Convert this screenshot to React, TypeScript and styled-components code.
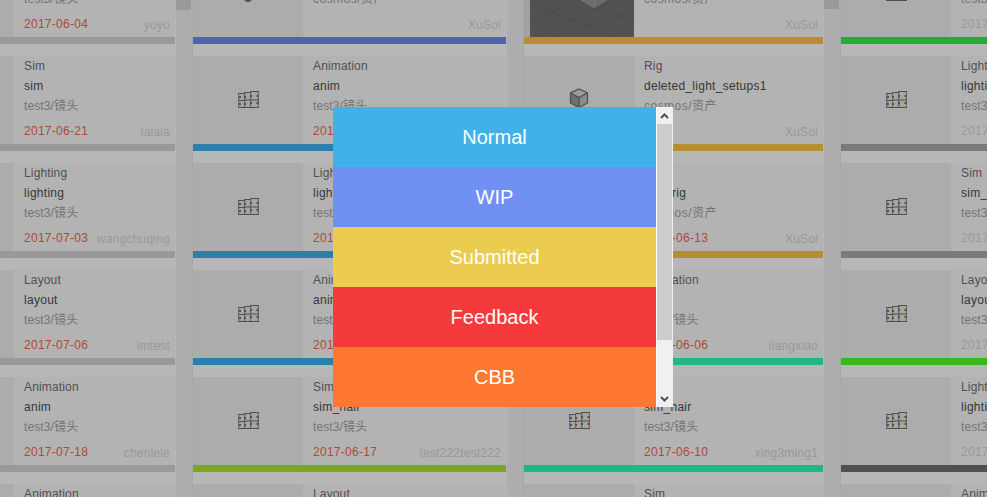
import React from "react";
import styled, { createGlobalStyle } from "styled-components";

const GlobalStyle = createGlobalStyle`
  html, body { margin: 0; width: 100%; height: 100%; overflow: hidden; }
  body {
    background: #adadad;
    font-family: "Liberation Sans", "Noto Sans CJK SC", sans-serif;
    font-size: 12px;
  }
`;

type Icon = "shelf" | "shelfBlue" | "cube" | "render" | "pin" | "none";
interface Task {
  type: string;
  name: string;
  path: string;
  date?: string;
  user: string;
  color: string;
  icon: Icon;
}
const task = (
  type: string, name: string, path: string, date: string,
  user: string, color: string, icon: Icon = "shelf",
): Task => ({ type, name, path, date, user, color, icon });

const SHOT = "test3/镜头";
const ASSET = "cosmos/资产";

const columns: { width: number; gap: number; cut?: boolean; thumb: number; muted?: boolean; tasks: Task[] }[] = [
  {
    width: 175, gap: 18, cut: true, thumb: 10,
    tasks: [
      task("Sim", "sim", SHOT, "2017-06-04", "yoyo", "#999999"),
      task("Sim", "sim", SHOT, "2017-06-21", "lalala", "#999999"),
      task("Lighting", "lighting", SHOT, "2017-07-03", "wangchuqing", "#999999"),
      task("Layout", "layout", SHOT, "2017-07-06", "imtest", "#999999"),
      task("Animation", "anim", SHOT, "2017-07-18", "chenlele", "#999999"),
      task("Animation", "anim", SHOT, "2017-07-19", "chenlele", "#999999"),
    ],
  },
  {
    width: 313, gap: 18, thumb: 0,
    tasks: [
      task("Rig", "rig", ASSET, "", "XuSol", "#4d65b1", "pin"),
      task("Animation", "anim", SHOT, "2017-06-21", "", "#2a7fac"),
      task("Lighting", "lighting", SHOT, "2017-06-13", "", "#2a7fac"),
      task("Animation", "anim", SHOT, "2017-06-13", "", "#2a7fac"),
      task("Sim", "sim_hair", SHOT, "2017-06-17", "test222test222", "#7ba527"),
      task("Layout", "layout", SHOT, "", "", "#7ba527"),
    ],
  },
  {
    width: 299, gap: 18, thumb: 9,
    tasks: [
      task("Rig", "rig", ASSET, "", "XuSol", "#b58e2e", "render"),
      task("Rig", "deleted_light_setups1", ASSET, "", "XuSol", "#b58e2e", "cube"),
      task("Rig", "hair_rig", ASSET, "2017-06-13", "XuSol", "#b58e2e", "none"),
      task("Animation", "anim", SHOT, "2017-06-06", "liangxiao", "#20b783", "none"),
      task("Sim", "sim_hair", SHOT, "2017-06-10", "xing3ming1", "#20b783", "shelfBlue"),
      task("Sim", "sim", SHOT, "", "", "#20b783"),
    ],
  },
  {
    width: 299, gap: 0, thumb: 0, muted: true,
    tasks: [
      task("Sim", "sim", SHOT, "2017-06-04", "", "#24ae30", "shelfBlue"),
      task("Lighting", "lighting", SHOT, "2017-06-21", "", "#7a7a7a", "shelfBlue"),
      task("Sim", "sim_hair", SHOT, "2017-07-03", "", "#7a7a7a", "shelfBlue"),
      task("Layout", "layout", SHOT, "2017-07-06", "", "#37b81f", "shelfBlue"),
      task("Lighting", "lighting", SHOT, "2017-07-18", "", "#505050", "shelfBlue"),
      task("Animation", "anim", SHOT, "", "", "#505050", "shelfBlue"),
    ],
  },
];

const Board = styled.main`
  position: relative;
  display: flex;
  width: 987px;
  height: 497px;
  overflow: hidden;
  background: #adadad;
`;
const Column = styled.section<{ $width: number }>`
  flex: 0 0 ${(p) => p.$width + 1}px;
  width: ${(p) => p.$width + 1}px;
  height: 497px;
  overflow: hidden;
  background: #b7b7b7;
`;
const Cards = styled.div`
  display: flex;
  flex-direction: column;
  gap: 12px;
  margin-top: -51px;
`;
const Card = styled.article<{ $width: number; $color: string }>`
  display: flex;
  box-sizing: border-box;
  width: ${(p) => p.$width}px;
  height: 95px;
  background: #b3b3b3;
  border-bottom: 7px solid ${(p) => p.$color};
`;
const Thumbnail = styled.div<{ $cut?: boolean }>`
  display: flex;
  align-items: center;
  justify-content: center;
  flex: 0 0 ${(p) => (p.$cut ? 14 : 110)}px;
  height: 88px;
  overflow: hidden;
  background: #acacac;
  svg { display: block; flex: none; }
`;
const Details = styled.div`
  flex: 1;
  min-width: 0;
  box-sizing: border-box;
  padding: 0 5px 0 10px;
  white-space: nowrap;
  line-height: 20px;
`;
const TypeLabel = styled.div`
  height: 20px;
  color: #505050;
  letter-spacing: 0.15px;
`;
const NameLabel = styled.div`
  height: 20px;
  color: #363636;
  letter-spacing: 0.28px;
`;
const PathLabel = styled.div<{ $wide: boolean }>`
  height: 20px;
  color: #747474;
  letter-spacing: ${(p) => (p.$wide ? 0.48 : 0.12)}px;
`;
const Meta = styled.div`
  display: flex;
  justify-content: space-between;
  height: 20px;
  margin-top: 5px;
`;
const DateLabel = styled.span<{ $muted?: boolean }>`
  color: ${(p) => (p.$muted ? "#999999" : "#ae4932")};
  letter-spacing: 0.28px;
`;
const UserLabel = styled.span`
  margin-left: auto;
  padding-top: 1px;
  color: #999999;
  letter-spacing: 0.2px;
`;
const Gutter = styled.div<{ $width: number }>`
  flex: 0 0 ${(p) => p.$width - 1}px;
  box-sizing: border-box;
  background: #adadad;
  border-right: 1px solid #a8a8a8;
`;
const GutterThumb = styled.div<{ $height: number }>`
  width: 15px;
  height: ${(p) => p.$height}px;
  background: #999999;
`;

const Popup = styled.div`
  position: absolute;
  top: 107px;
  left: 333px;
  display: flex;
  width: 340px;
  height: 300px;
`;
const StatusList = styled.div`
  flex: 0 0 323px;
`;
const StatusOption = styled.div<{ $color: string }>`
  height: 60px;
  background: ${(p) => p.$color};
  color: #fff;
  font-size: 20px;
  line-height: 60px;
  text-align: center;
`;
const Scrollbar = styled.div`
  display: flex;
  flex-direction: column;
  flex: 0 0 17px;
  box-sizing: border-box;
  padding: 0 1px;
  background: linear-gradient(to right, #fff 1px, #f0f0f0 1px);
`;
const ScrollArrow = styled.div`
  display: flex;
  align-items: center;
  justify-content: center;
  height: 17px;
`;
const ScrollThumb = styled.div`
  height: 216px;
  margin-bottom: 50px;
  background: #cdcdcd;
`;

function Shelf({ blue }: { blue?: boolean }) {
  const left = blue ? "#7590b5" : "#b98f78";
  const right = blue ? "#b99580" : "#8294ad";
  return (
    <svg width="24" height="22" viewBox="0 0 24 22">
      <path d="M2 5h6V4h6V3h9v16H2z" fill="#a6a6a0" />
      <path d="M3.5 5v14M15.5 3v16" stroke={left} />
      <path d="M9.500 4v15M21.500 3v16" stroke={right} />
      <path d="M17.500 4v15" stroke="#aca68e" />
      <path d="M2.500 4.500v14M8.500 4v14.500M14.500 3v15.500M22.500 3v15.500" stroke="#696969" />
      <path d="M2 4.500h6l1-1h5l1-1h8M2 11.500h7l1-.5h13M2 18.500h21" fill="none" stroke="#4f4f4f" strokeWidth="1.2" />
      <path d="M3 8h2M3 15h2M8 8h2M8 15h2M14 7h2M14 14h2M20.500 7h2M20.500 14h2" stroke="#505050" strokeWidth="2" />
    </svg>
  );
}

function Cube() {
  return (
    <svg width="20" height="26" viewBox="0 0 20 26">
      <path d="M10 2 18.5 6v10L10 20.5 1.5 16V6z" fill="#707070" />
      <path d="M10 2 18.5 6 10 10.5 1.5 6z" fill="#9b9b9b" />
      <path d="M10 10.5 18.5 6v10L10 20.5z" fill="#8c8c8c" />
      <path d="M10 2 18.5 6v10L10 20.5 1.5 16V6zM1.5 6 10 10.5 18.5 6M10 10.5v10" fill="none" stroke="#4d4d4d" strokeWidth="1.2" />
    </svg>
  );
}

function RenderPreview() {
  return (
    <svg width="110" height="88" viewBox="0 0 110 88">
      <rect width="6" height="88" fill="#a2a2a2" />
      <rect x="6" width="104" height="88" fill="#525252" />
      <path d="M6 75 110 20M6 92 110 43M30 88 110 62M6 55 90 88M25 40 110 73M50 35l60 24" stroke="#4c4c4c" />
      <path d="m55 50 15 8.500 14-8.500-14-10z" fill="#6c6c6c" stroke="#647d76" />
      <path d="M70 48v10" stroke="#647d76" />
    </svg>
  );
}

function Pin() {
  return (
    <svg width="14" height="22" viewBox="0 0 14 22">
      <circle cx="7" cy="16" r="4" fill="#505050" />
    </svg>
  );
}

function Picture({ icon }: { icon: Icon }) {
  if (icon === "cube") return <Cube />;
  if (icon === "render") return <RenderPreview />;
  if (icon === "pin") return <Pin />;
  if (icon === "none") return null;
  return <Shelf blue={icon === "shelfBlue"} />;
}

const statuses = [
  ["Normal", "#40b1eb"],
  ["WIP", "#7090f4"],
  ["Submitted", "#ebcc50"],
  ["Feedback", "#f43a3a"],
  ["CBB", "#ff7832"],
];

export default function App() {
  return (
    <>
      <GlobalStyle />
      <Board>
        {columns.map((col, i) => (
          <React.Fragment key={i}>
            <Column $width={col.width}>
              <Cards>
                {col.tasks.map((t, j) => (
                  <Card key={j} $width={col.width} $color={t.color}>
                    <Thumbnail $cut={col.cut}>{!col.cut && <Picture icon={t.icon} />}</Thumbnail>
                    <Details>
                      <TypeLabel>{t.type}</TypeLabel>
                      <NameLabel>{t.name}</NameLabel>
                      <PathLabel $wide={t.path === ASSET}>{t.path}</PathLabel>
                      <Meta>
                        <DateLabel $muted={col.muted}>{t.date}</DateLabel>
                        <UserLabel>{t.user}</UserLabel>
                      </Meta>
                    </Details>
                  </Card>
                ))}
              </Cards>
            </Column>
            {col.gap > 0 && (
              <Gutter $width={col.gap}>
                <GutterThumb $height={col.thumb} />
              </Gutter>
            )}
          </React.Fragment>
        ))}
        <Popup>
          <StatusList>
            {statuses.map(([label, color]) => (
              <StatusOption key={label} $color={color}>{label}</StatusOption>
            ))}
          </StatusList>
          <Scrollbar>
            <ScrollArrow>
              <svg width="9" height="7" viewBox="0 0 9 7"><path d="m1 6 3.500-3.500L8 6" fill="none" stroke="#505050" strokeWidth="2" /></svg>
            </ScrollArrow>
            <ScrollThumb />
            <ScrollArrow>
              <svg width="9" height="7" viewBox="0 0 9 7"><path d="m1 2 3.500 3.500L8 2" fill="none" stroke="#505050" strokeWidth="2" /></svg>
            </ScrollArrow>
          </Scrollbar>
        </Popup>
      </Board>
    </>
  );
}
